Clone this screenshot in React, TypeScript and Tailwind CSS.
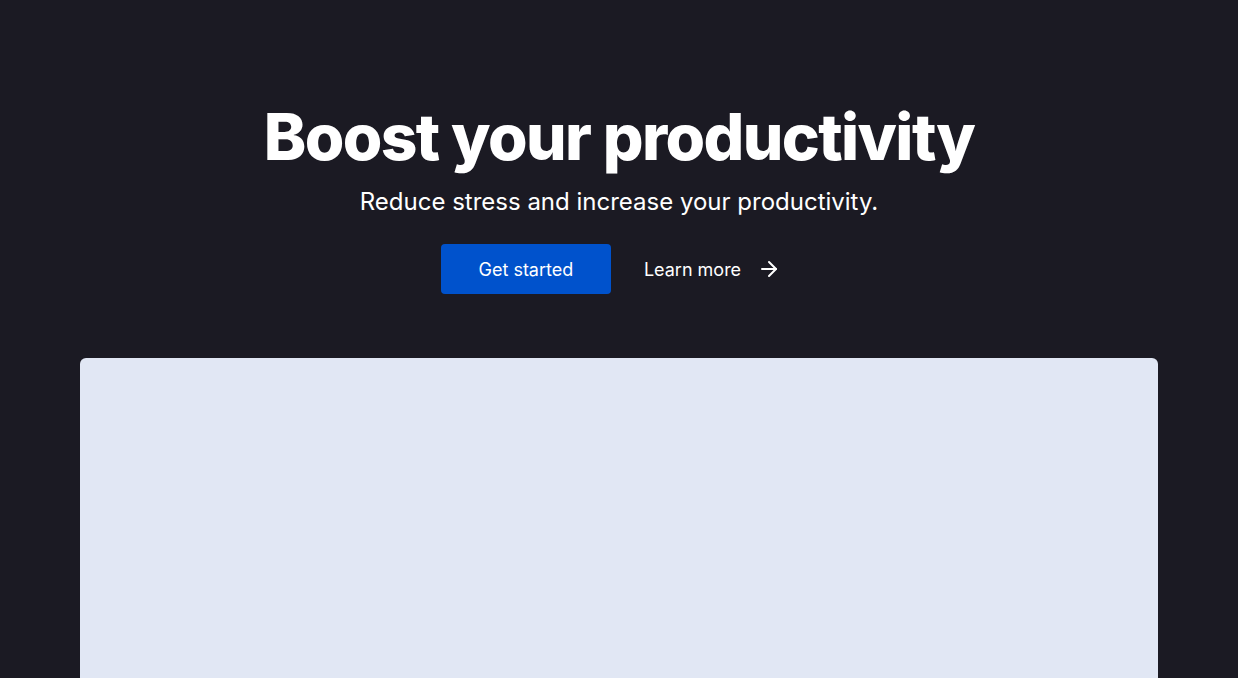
import { ArrowRight } from 'lucide-react'

export default function App() {
  return (
    <div
      className="min-h-screen bg-[#1b1a23] text-white overflow-hidden"
      style={{ fontFamily: 'Inter, "Noto Sans", sans-serif' }}
    >
      <section className="flex flex-col items-center pt-[97px]">
        <h1 className="text-[64px] leading-[80px] font-extrabold tracking-[-0.025em]">
          Boost your productivity
        </h1>
        <p className="mt-[9px] text-[24px] leading-[32px]">
          Reduce stress and increase your productivity.
        </p>
        <div className="mt-[26px] flex items-center gap-[33px]">
          <button className="h-[50px] w-[170px] rounded-[4px] bg-[#0052cc] text-[18px] font-normal">
            Get started
          </button>
          <a className="flex items-center gap-[16px] pr-[16px] text-[18px] font-normal">
            Learn more
            <ArrowRight className="h-6 w-6" strokeWidth={2} />
          </a>
        </div>
      </section>
      <div className="mx-[80px] mt-[64px] h-[400px] rounded-t-[6px] bg-[#e1e7f4]" />
    </div>
  )
}
